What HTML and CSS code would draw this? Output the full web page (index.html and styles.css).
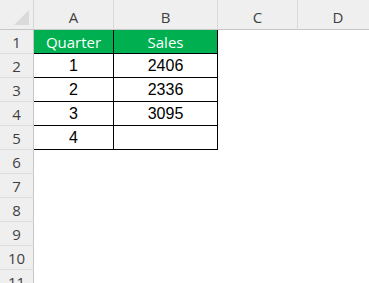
FILE: index.html
```html
<!DOCTYPE html>
<html lang="en">
<head>
    <meta charset="UTF-8" />
    <title>Sheet</title>
    <link rel="stylesheet" href="styles.css">
</head>
<body>
<main class="sheet">
    <div class="corner"><span class="corner-mark"></span></div>
    <div class="col-head">A</div>
    <div class="col-head">B</div>
    <div class="col-head">C</div>
    <div class="col-head last">D</div>

    <div class="row-head">1</div>
    <div class="cell tbl title">Quarter</div>
    <div class="cell tbl title">Sales</div>
    <div class="cell"></div>
    <div class="cell"></div>

    <div class="row-head">2</div>
    <div class="cell tbl">1</div>
    <div class="cell tbl">2406</div>
    <div class="cell"></div>
    <div class="cell"></div>

    <div class="row-head">3</div>
    <div class="cell tbl">2</div>
    <div class="cell tbl">2336</div>
    <div class="cell"></div>
    <div class="cell"></div>

    <div class="row-head">4</div>
    <div class="cell tbl">3</div>
    <div class="cell tbl">3095</div>
    <div class="cell"></div>
    <div class="cell"></div>

    <div class="row-head">5</div>
    <div class="cell tbl">4</div>
    <div class="cell tbl"></div>
    <div class="cell"></div>
    <div class="cell"></div>

    <div class="row-head">6</div>
    <div class="cell blank"></div>
    <div class="row-head">7</div>
    <div class="cell blank"></div>
    <div class="row-head">8</div>
    <div class="cell blank"></div>
    <div class="row-head">9</div>
    <div class="cell blank"></div>
    <div class="row-head">10</div>
    <div class="cell blank"></div>
    <div class="row-head">11</div>
    <div class="cell blank"></div>
</main>
</body>
</html>
```

FILE: styles.css
```css
/* Base */
* {
    box-sizing: border-box;
}
body {
    margin: 0;
    background: #fff;
    width: 369px;
    height: 283px;
    overflow: hidden;
}
.sheet {
    display: grid;
    grid-template-columns: 34px 80px 104px 80px 80px;
    grid-template-rows: 30px repeat(11, 24px);
    font-family: 'Open Sans', 'Noto Sans', sans-serif;
}
/* Headers */
.corner {
    background: #efefef;
    border-right: 1px solid #d6d6d6;
    border-bottom: 1px solid #c6c6c6;
    display: flex;
    justify-content: flex-end;
    align-items: flex-end;
    padding: 0 4px 4px 0;
}
.corner-mark {
    width: 0;
    height: 0;
    border-left: 15px solid transparent;
    border-bottom: 15px solid #dadada;
}
.col-head {
    background: #efefef;
    border-right: 1px solid #dadada;
    border-bottom: 1px solid #c6c6c6;
    color: #3f3f3f;
    font-size: 15px;
    display: flex;
    justify-content: center;
    align-items: flex-end;
    padding-bottom: 2px;
}
.col-head.last {
    border-right: none;
}
.row-head {
    background: #efefef;
    border-right: 1px solid #c6c6c6;
    border-bottom: 1px solid #dcdcdc;
    color: #3f3f3f;
    font-size: 15px;
    display: flex;
    justify-content: center;
    align-items: flex-end;
    line-height: 22px;
}
/* Cells */
.cell {
    display: flex;
    justify-content: center;
    align-items: flex-end;
    font-family: 'Liberation Sans', Arial, sans-serif;
    font-size: 16px;
    color: #000;
    line-height: 22px;
}
.cell.blank {
    grid-column: 2 / 6;
}
.cell.tbl {
    border-right: 1px solid #000;
    border-bottom: 1px solid #000;
}
.cell.title {
    background: #00b050;
    color: #fff;
    font-family: 'Open Sans', 'Noto Sans', sans-serif;
    font-size: 15px;
}
```
